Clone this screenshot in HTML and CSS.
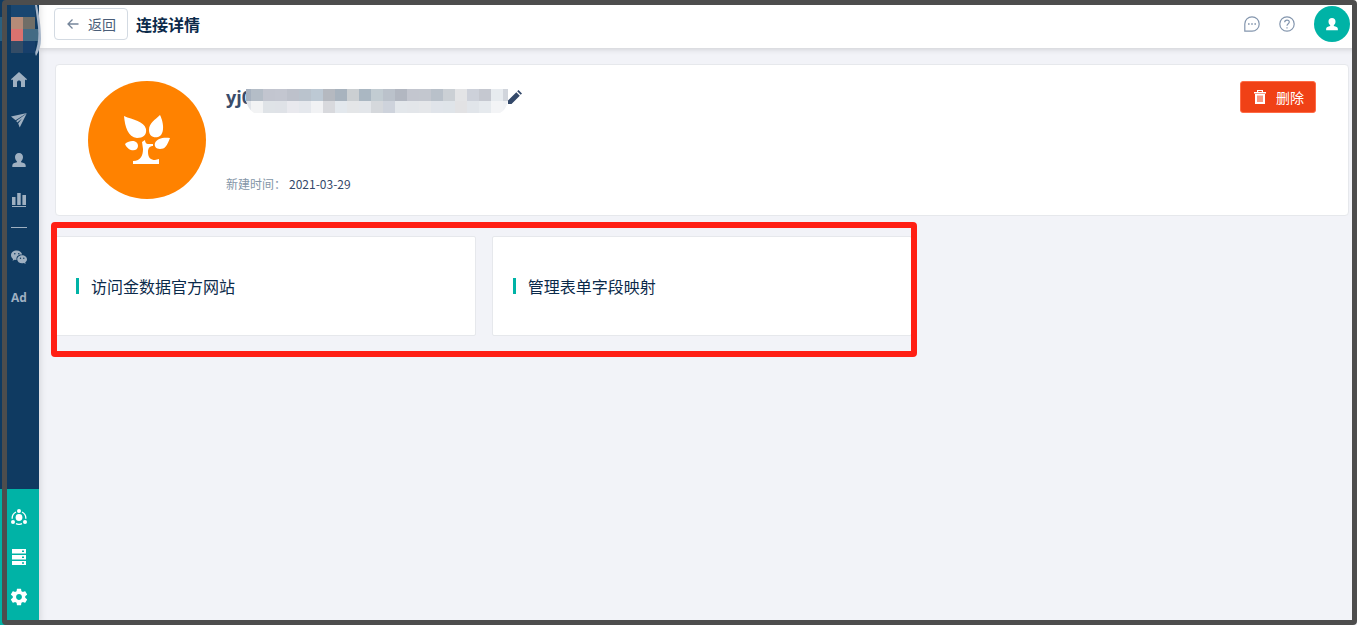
FILE: index.html
```html
<!DOCTYPE html>
<html lang="zh-CN">
<head>
  <meta charset="utf-8">
  <title>连接详情</title>
  <link rel="stylesheet" href="styles.css">
</head>

<body>
  <div class="app">
    <aside class="sidebar">
      <a class="logo" href="#" aria-label="Logo">
        <svg width="41" height="60" viewBox="0 0 41 60">
          <path fill="#2a6080" d="M0 17h3v24H0z"/>
          <path fill="#194670" d="M11 5h24v12H11z"/>
          <path fill="#b58b78" d="M11 17h12v12H11z"/>
          <path fill="#706e67" d="M23 17h12v12H23z"/>
          <path fill="#da726f" d="M11 29h12v12H11z"/>
          <path fill="#436b84" d="M23 29h16v12H23z"/>
          <path fill="#344c66" d="M11 41h12v12H11z"/>
          <path fill="#173f6b" d="M23 41h12v12H23z"/>
          <path fill="#a6b5c8" d="M35 5h2c2 10 4 20 4 34 0 7-2 12-5 17-1-2-1-4 0-6 2-7 3-14 2-23-1-8-2-15-3-22z"/>
        </svg>
      </a>
      <nav class="menu">
        <a class="menu-item" href="#" aria-label="Home">
          <svg width="16" height="16" viewBox="0 0 16 16" fill="currentColor"><path d="M8 0l8 7.3-.8 1L14 7.4V15h-4v-4.5c0-2.600-4-2.600-4 0V15H2V7.400L.8 8.300 0 7.300z"/></svg>
        </a>
        <a class="menu-item" href="#" aria-label="Send">
          <svg width="16" height="16" viewBox="0 0 16 16" fill="currentColor"><path d="M0 4.500L16 1 4.600 8.200zM5.200 9L15.700 1.600 8.700 15.500l-1.500-4L11 6.500 6.300 10.400z"/></svg>
        </a>
        <a class="menu-item" href="#" aria-label="Contacts">
          <svg width="16" height="16" viewBox="0 0 16 16" fill="currentColor"><path d="M8 1c2.500 0 4 1.700 4 4 0 1.800-.8 3.300-1.900 4.200v1c2.500.6 4.600 1.300 4.600 3.200V15H1.300v-1.600c0-1.900 2.100-2.600 4.600-3.200v-1C4.800 8.300 4 6.800 4 5c0-2.300 1.500-4 4-4z"/></svg>
        </a>
        <a class="menu-item" href="#" aria-label="Reports">
          <svg width="16" height="16" viewBox="0 0 16 16" fill="currentColor"><path d="M1 5h3.500v8H1zM6.200 1h3.500v12H6.200zM11.400 3H15v10h-3.600zM1 14h14v1H1z"/></svg>
        </a>
        <hr class="menu-line">
        <a class="menu-item" href="#" aria-label="WeChat">
          <svg width="16" height="16" viewBox="0 0 16 16" fill="currentColor"><path fill-rule="evenodd" d="M5.700 1.500C2.500 1.500 0 3.600 0 6.200c0 1.500.8 2.800 2.100 3.700L1.600 11.700l2-1 1.900.3C5 7.500 7.500 5.500 11.200 5.600 10.700 3.200 8.500 1.500 5.700 1.500zM3.800 3.900a.8.8 0 110 1.600.8.8 0 010-1.600zm4 0a.8.8 0 110 1.600.8.8 0 010-1.600z"/><path fill-rule="evenodd" d="M11.100 6.300c2.700 0 4.900 1.800 4.900 4 0 1.300-.7 2.400-1.800 3.200l.4 1.500-1.700-.9c-3.700.9-6.700-1-6.700-3.800 0-2.200 2.200-4 4.900-4zM9.500 8.500a.7.700 0 100 1.400.7.700 0 000-1.400zm3.300 0a.7.700 0 100 1.400.7.700 0 000-1.400z"/></svg>
        </a>
        <a class="menu-item" href="#">Ad</a>
      </nav>
      <nav class="menu menu-bottom">
        <a class="menu-item" href="#" aria-label="Connections">
          <svg width="16" height="16" viewBox="0 0 16 16" fill="currentColor"><circle cx="8" cy="8.500" r="3.400"/><circle cx="8" cy="2" r="2"/><circle cx="2" cy="13" r="2"/><circle cx="14" cy="13" r="2"/><path fill="none" stroke="currentColor" stroke-width="1.300" d="M5 3C2.500 4.200 1 6.700 1.200 9.700M11 3c2.500 1.200 4 3.700 3.800 6.700M5 14.700c2 .9 4 .9 6 0"/></svg>
        </a>
        <a class="menu-item" href="#" aria-label="Data">
          <svg width="16" height="16" viewBox="0 0 16 16" fill="currentColor"><path fill-rule="evenodd" d="M1 0h14v4.500H1zM11 1.500V3h2V1.500zM1 6h14v4.500H1zm10 1.500V9h2V7.500zM1 12h14v4H1zm10 1.200v1.500h2v-1.500z"/></svg>
        </a>
        <a class="menu-item" href="#" aria-label="Settings">
          <svg width="20" height="20" viewBox="0 0 24 24" fill="currentColor"><path d="M19.430 12.980c.04-.32.070-.64.070-.98s-.03-.66-.070-.98l2.110-1.650c.19-.15.240-.42.120-.64l-2-3.460c-.12-.22-.39-.3-.61-.22l-2.490 1c-.52-.4-1.080-.73-1.690-.98l-.38-2.650A.488.488 0 0014 2h-4c-.25 0-.46.180-.49.420l-.38 2.650c-.61.250-1.170.590-1.690.980l-2.490-1c-.23-.09-.49 0-.61.220l-2 3.460c-.13.220-.07.490.120.640l2.110 1.650c-.04.320-.07.650-.07.980s.03.660.070.980l-2.110 1.650c-.19.150-.24.420-.12.640l2 3.460c.12.220.39.300.610.220l2.490-1c.52.400 1.080.730 1.690.980l.38 2.650c.03.240.240.420.490.420h4c.25 0 .46-.18.490-.42l.38-2.650c.61-.25 1.170-.59 1.690-.98l2.490 1c.23.090.49 0 .61-.22l2-3.460c.12-.22.070-.49-.12-.64l-2.110-1.650zM12 15.500c-1.930 0-3.500-1.570-3.500-3.500s1.570-3.500 3.500-3.500 3.500 1.570 3.500 3.500-1.570 3.500-3.500 3.500z"/></svg>
        </a>
      </nav>
    </aside>

    <div class="main">
      <header class="header">
        <button class="btn-back" type="button">
          <svg width="12" height="12" viewBox="0 0 12 12" fill="none" stroke="currentColor" stroke-width="1.300"><path d="M11.500 6H1M5.500 1.500L1 6l4.500 4.500"/></svg>
          返回
        </button>
        <h1 class="title">连接详情</h1>
        <div class="header-tools">
          <button class="btn-icon" type="button" aria-label="Messages">
            <svg width="16" height="16" viewBox="0 0 16 16" fill="none" stroke="currentColor" stroke-width="1.200"><path d="M.8 15.200V8A7.200 7.200 0 118 15.200z"/><path stroke-width="1.500" d="M4 8h1.600M7.200 8h1.600M10.400 8H12"/></svg>
          </button>
          <button class="btn-icon" type="button" aria-label="Help">
            <svg width="16" height="16" viewBox="0 0 16 16" fill="none" stroke="currentColor" stroke-width="1.200"><circle cx="8" cy="8" r="7.200"/><path d="M5.700 6.300c0-3 4.600-2.900 4.600-.2C10.300 7.700 8 7.700 8 9.700M8 11.200v1.300"/></svg>
          </button>
          <button class="avatar" type="button" aria-label="Account">
            <svg width="14" height="14" viewBox="0 0 16 16" fill="currentColor"><path d="M8 1c2.500 0 4 1.700 4 4 0 1.800-.8 3.300-1.900 4.200v1c2.500.6 4.600 1.300 4.600 3.200V15H1.300v-1.600c0-1.900 2.100-2.600 4.600-3.200v-1C4.800 8.300 4 6.800 4 5c0-2.300 1.500-4 4-4z"/></svg>
          </button>
        </div>
      </header>

      <main class="content">
        <section class="card">
          <div class="app-icon">
            <svg width="48" height="52" viewBox="0 0 48 52" fill="#fff"><path d="M1 2c9 4 20 5 22 13 1 6-3 9-9 9C5 23 2 13 1 2zM37 1c4 8 5 20-2 22-5 1-9-1-9-7C26 9 32 6 37 1zM2 30c6-5 13-3 13 2 0 6-10 6-13-2zM47 24c-3 8-5 11-10 11-4 0-6-3-5-6 2-5 9-6 15-5zM19 28l3-2c0 2 1 4 3 4h5v2c-3 0-5 2-5 6 0 6 3 8 7 8l4-1v5H10v-3c8 0 10-6 10-12z"/></svg>
          </div>
          <div class="info">
            <div class="name-row">
              <h2 class="name">yj0</h2>
              <svg class="mask" width="262" height="24" viewBox="0 0 262 24" shape-rendering="crispEdges">
                <clipPath id="mask-shape"><path d="M0 0h262v12q-2 9-8 12H8Q2 20 0 12z"/></clipPath>
                <g id="mask-cells" clip-path="url(#mask-shape)"></g>
              </svg>
              <button class="btn-edit" type="button" aria-label="Edit">
                <svg width="14" height="14" viewBox="0 0 14 14" fill="currentColor"><path d="M0 14v-3.500L8.300 2.200l3.500 3.500L3.500 14zM9.200 1.300L10.500 0 14 3.500l-1.300 1.300z"/></svg>
              </button>
            </div>
            <p class="created"><span class="label">新建时间：</span>2021-03-29</p>
          </div>
          <button class="btn-delete" type="button">
            <svg width="12" height="14" viewBox="0 0 12 14" fill="#fff"><path fill-rule="evenodd" d="M0 2h3V0h6v2h3v1.500H0zM4.200 1v1h3.600V1zM1 4h10v10H1z"/><path fill="#f79a84" d="M3 5.500h6v6.500H3z"/></svg>
            删除
          </button>
        </section>

        <section class="tiles">
          <div class="tile-group">
            <a class="tile" href="#">访问金数据官方网站</a>
            <a class="tile" href="#">管理表单字段映射</a>
          </div>
        </section>
      </main>
    </div>
  </div>
  <div class="frame"></div>

  <script>
    // Mosaic over the account name, two rows of 12px cells
    const rows = [
      ["a6b1bf", "b4bdc7", "c2c5cf", "c3c6d0", "bdc1cb", "bac3cd", "bdc9d4", "b5b9c0", "a8b3be", "cbcfd2", "aab7c2", "c2ccd2", "bbc2cb", "b2b7c1", "c3c6cf", "c3c7cf", "b9c1ca", "cbd0d5", "e3e4e6", "cdd1da", "c5c8d0", "e7ebef", "d1d5dc"],
      ["e0e4e9", "f2f3f4", "dfe3e7", "dfe2e7", "e9e9ee", "e5e8ed", "f1f2f4", "d8d9dd", "e3e8ed", "e4e6e8", "e3e6ea", "d5d8dc", "ced3dc", "e3e7eb", "e3e6ea", "e5e7ea", "e0e4ea", "dfe4e9", "e2e2e4", "e1e5ea", "e6eaee", "f3f4f6", "f0f2f5"]
    ];
    const cells = document.querySelector("#mask-cells");

    rows.forEach((row, y) => {
      row.forEach((color, i) => {
        const rect = document.createElementNS("http://www.w3.org/2000/svg", "rect");
        rect.setAttribute("x", i === 0 ? 0 : 5 + (i - 1) * 12);
        rect.setAttribute("y", y * 12);
        rect.setAttribute("width", i === 0 ? 5 : 12);
        rect.setAttribute("height", 12);
        rect.setAttribute("fill", "#" + color);
        cells.appendChild(rect);
      });
    });
  </script>
</body>
</html>
```

FILE: styles.css
```css
* {
  box-sizing: border-box;
}

body {
  margin: 0;
  background-color: #f2f3f8;
  color: #0b2a4a;
  font-family: "Noto Sans CJK SC", sans-serif;
  font-size: 14px;
}

button {
  font-family: inherit;
  cursor: pointer;
}

svg {
  display: block;
}

.app {
  display: flex;
  min-height: 100vh;
}

/* Sidebar */
.sidebar {
  display: flex;
  flex-direction: column;
  flex: none;
  width: 39px;
  background-color: #0f3a61;
  box-shadow: 0 0 8px rgba(0, 0, 0, 0.16);
  position: relative;
  z-index: 2;
}

.logo {
  height: 60px;
}

.menu {
  display: flex;
  flex-direction: column;
  padding-right: 1px;
}

.menu-item {
  display: flex;
  align-items: center;
  justify-content: center;
  height: 40px;
  color: #9fb0c1;
  font-family: "Open Sans", sans-serif;
  font-size: 12px;
  font-weight: bold;
  text-decoration: none;
}

.menu-line {
  width: 16px;
  height: 1px;
  margin: 7px auto 9px;
  border: none;
  background-color: #9fb0c1;
}

.menu-bottom {
  margin-top: auto;
  padding: 8px 1px 8px 0;
  background-color: #00b3a6;
}

.menu-bottom .menu-item {
  color: #fff;
}

/* Header */
.main {
  flex: 1;
  min-width: 0;
}

.header {
  display: flex;
  align-items: center;
  gap: 8px;
  height: 48px;
  padding: 0 7px 0 15px;
  background-color: #fff;
  box-shadow: 0 1px 6px rgba(0, 0, 0, 0.16);
}

.btn-back {
  display: flex;
  align-items: center;
  gap: 9px;
  height: 32px;
  padding: 0 11px 0 12px;
  border: 1px solid #d3dae2;
  border-radius: 4px;
  background-color: #fff;
  color: #4a5d78;
  font-size: 14px;
}

.btn-back svg {
  color: #75859a;
}

.title {
  margin: 0;
  font-size: 16px;
  font-weight: bold;
}

.header-tools {
  display: flex;
  align-items: center;
  gap: 19px;
  margin-left: auto;
}

.btn-icon {
  padding: 0;
  border: none;
  background: none;
  color: #8496ae;
}

.avatar {
  display: flex;
  align-items: center;
  justify-content: center;
  width: 36px;
  height: 36px;
  padding: 0;
  border: none;
  border-radius: 50%;
  background-color: #00b3a6;
  color: #fff;
}

/* Content */
.content {
  padding: 16px 8px 16px 16px;
}

.card {
  display: flex;
  align-items: flex-start;
  padding: 16px 32px;
  border: 1px solid #e6e8ec;
  border-radius: 4px;
  background-color: #fff;
}

.app-icon {
  display: flex;
  align-items: center;
  justify-content: center;
  flex: none;
  width: 118px;
  height: 118px;
  border-radius: 50%;
  background-color: #ff8200;
}

.info {
  display: flex;
  flex-direction: column;
  align-self: stretch;
  justify-content: space-between;
  padding-bottom: 5px;
  margin-left: 20px;
}

.name-row {
  display: flex;
  align-items: center;
  height: 32px;
}

.name {
  width: 20px;
  margin: 0;
  color: #3a4d6b;
  font-family: "Open Sans", sans-serif;
  font-size: 18px;
  line-height: 24px;
}

.mask {
  align-self: flex-end;
  position: relative;
}

.btn-edit {
  padding: 0;
  border: none;
  background: none;
  color: #34496a;
}

.created {
  margin: 0;
  color: #34496a;
  font-size: 12px;
  line-height: 20px;
}

.label {
  margin-right: 3px;
  color: #8496a8;
}

.btn-delete {
  display: flex;
  align-items: center;
  gap: 10px;
  height: 32px;
  margin-left: auto;
  padding: 0 11px 0 13px;
  border: 1px solid #ff6a45;
  border-radius: 3px;
  background-color: #f04116;
  color: #fff;
  font-size: 14px;
}

.tiles {
  display: grid;
  grid-template-columns: repeat(3, 1fr);
  grid-gap: 16px;
  margin-top: 20px;
}

.tile-group {
  display: grid;
  grid-column: span 2;
  grid-template-columns: repeat(2, 1fr);
  grid-gap: 16px;
  position: relative;
}

/* Red highlight around the tiles */
.tile-group::after {
  content: "";
  position: absolute;
  top: -14px;
  right: -5px;
  bottom: -21px;
  left: -4px;
  border: 6px solid #ff1f14;
  border-radius: 4px;
  pointer-events: none;
}

.tile {
  display: flex;
  align-items: center;
  gap: 12px;
  height: 100px;
  padding: 0 20px;
  border: 1px solid #e6e8ec;
  border-radius: 2px;
  background-color: #fff;
  color: #0b2a4a;
  font-size: 16px;
  text-decoration: none;
}

.tile::before {
  content: "";
  width: 3px;
  height: 16px;
  background-color: #00b3a6;
}

/* Window frame */
.frame {
  position: fixed;
  top: 0;
  right: 0;
  bottom: 0;
  left: 2px;
  z-index: 10;
  border: 5px solid #4d4d4d;
  border-radius: 4px;
  pointer-events: none;
}
```
